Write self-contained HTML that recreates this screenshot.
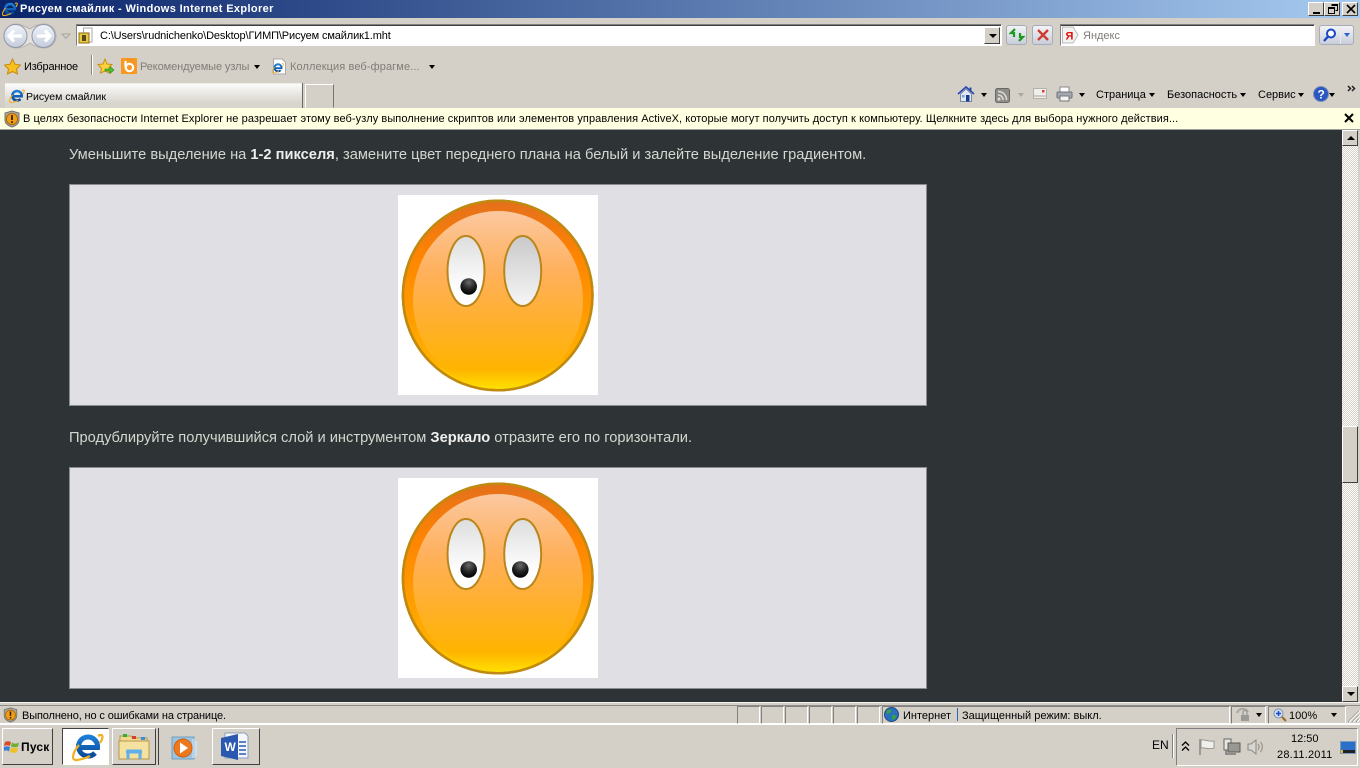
<!DOCTYPE html>
<html lang="ru"><head><meta charset="utf-8"><title>Рисуем смайлик</title>
<style>
html,body{margin:0;padding:0;width:1360px;height:768px;overflow:hidden;background:#d4d0c8}
body{position:relative;font-family:"Liberation Sans",Arial,sans-serif;font-size:11px;color:#000}
.a,.t,svg.i{position:absolute}
.t{white-space:nowrap;line-height:14px;height:14px}
.g{color:#807d78}
.ar{position:absolute;width:0;height:0;border-left:3.5px solid transparent;border-right:3.5px solid transparent;border-top:4px solid #000}
.btn{position:absolute;background:#d4d0c8;border:1px solid;border-color:#fff #404040 #404040 #fff;box-sizing:border-box}
.sunk{position:absolute;box-sizing:border-box;border:1px solid;border-color:#808080 #fff #fff #808080}
.p{position:absolute;left:69px;color:#d3d7cf;font-size:14.67px;line-height:18px;white-space:nowrap}
.p b{color:#eeeeec}
.box{position:absolute;left:69px;width:858px;height:222px;box-sizing:border-box;background:#e0dfe3;border:1px solid #8b8b8b}
.img{position:absolute;left:398px;width:200px;height:200px;background:#fff}
.tbtn{position:absolute;top:728px;height:37px;box-sizing:border-box;border:1px solid;border-color:#fff #404040 #404040 #fff;background:#d4d0c8}
</style></head><body>
<svg width="0" height="0" style="position:absolute"><defs>
<linearGradient id="gOut" x1="0" y1="0" x2="0" y2="1"><stop offset="0" stop-color="#e46f1c"/><stop offset=".3" stop-color="#ff8500"/><stop offset=".6" stop-color="#ff9c00"/><stop offset=".85" stop-color="#ffb000"/><stop offset="1" stop-color="#ffe000"/></linearGradient>
<linearGradient id="gIn" x1="0" y1="0" x2="0" y2="1"><stop offset="0" stop-color="#fbc8a0"/><stop offset=".35" stop-color="#ffb05a"/><stop offset=".65" stop-color="#ffb028"/><stop offset=".89" stop-color="#ffb400"/><stop offset="1" stop-color="#ffe000"/></linearGradient>
<linearGradient id="gEye" x1="0" y1="0" x2="0" y2="1"><stop offset="0" stop-color="#dddddd"/><stop offset=".75" stop-color="#ffffff"/></linearGradient>
<linearGradient id="gEye2" x1="0" y1="0" x2="0" y2="1"><stop offset="0" stop-color="#c9c9c9"/><stop offset="1" stop-color="#f6f6f6"/></linearGradient>
<radialGradient id="gPup" cx=".5" cy=".25" r=".75"><stop offset="0" stop-color="#6a6a6a"/><stop offset=".55" stop-color="#222"/><stop offset="1" stop-color="#000"/></radialGradient>
<linearGradient id="gBtn" x1="0" y1="0" x2="0" y2="1"><stop offset="0" stop-color="#f0f2f8"/><stop offset="1" stop-color="#c4ccdc"/></linearGradient>
<linearGradient id="gE" x1="0" y1="0" x2="0" y2="1"><stop offset="0" stop-color="#1a7ed4"/><stop offset="1" stop-color="#0a4a9a"/></linearGradient>
<symbol id="ie" viewBox="0 0 32 32"><path d="M23 22A9.500 9.500 0 1 1 25.500 16.500H7" fill="none" stroke="url(#gE)" stroke-width="5"/><path d="M26 5C31 2 32 6 28 12M7 14C0 22 -1 30 5 29C9 28.500 14 27 18 25" fill="none" stroke="#f0b020" stroke-width="2.200"/></symbol>
<symbol id="sh" viewBox="0 0 16 18"><path d="M8 1L15 3V10C15 14 11 16 8 17C5 16 1 14 1 10V3Z" fill="#a8a8a0" stroke="#77756e"/><circle cx="8" cy="9" r="5.600" fill="#f0a018" stroke="#b06808"/><path d="M8 5V10M8 11.200V13" stroke="#3a2000" stroke-width="1.800"/></symbol>
</defs></svg>

<!-- title bar -->
<div class="a" style="left:0;top:0;width:1360px;height:18px;background:linear-gradient(90deg,#0a246a,#a6caf0)"></div>
<svg class="i" style="left:2px;top:1px" width="16" height="16"><use href="#ie" width="16" height="16"/></svg>
<div class="t" style="left:20px;top:2px;color:#fff;font-weight:bold;font-size:11px;letter-spacing:.36px">Рисуем смайлик - Windows Internet Explorer</div>
<div class="btn" style="left:1308px;top:2px;width:16px;height:14px"><div class="a" style="left:4px;top:9px;width:7px;height:2px;background:#000"></div></div>
<div class="btn" style="left:1324px;top:2px;width:16px;height:14px"><svg class="i" style="left:3px;top:1px" width="10" height="10"><path d="M3.500 .5H9.500V6.500H7.500M3.500 1.500H9.500M.5 3.500H6.500V9.500H.5ZM.5 4.500H6.500" fill="none" stroke="#000"/></svg></div>
<div class="btn" style="left:1342px;top:2px;width:16px;height:14px"><svg class="i" style="left:3px;top:1px" width="10" height="10"><path d="M1 1L9 9M9 1L1 9" stroke="#000" stroke-width="1.600"/></svg></div>

<!-- back / forward -->
<svg class="i" style="left:1px;top:21px" width="72" height="30">
<path d="M3 15C3 8 9 3 15 3C20 3 25 6 29 8C33 5 37 3 43 3C50 3 55 9 55 15C55 22 50 27 43 27C37 27 33 25 29 22C25 25 20 27 15 27C9 27 3 22 3 15Z" fill="#e4e2dc" stroke="#b4b2aa"/>
<circle cx="14.500" cy="15" r="11.500" fill="url(#gBtn)" stroke="#8f98ac"/>
<circle cx="42.500" cy="15" r="11.500" fill="url(#gBtn)" stroke="#8f98ac"/>
<path d="M8 15H21M13 9.500L8 15L13 20.500" fill="none" stroke="#fff" stroke-width="3.200"/>
<path d="M36 15H49M44 9.500L49 15L44 20.500" fill="none" stroke="#fff" stroke-width="3.200"/>
<path d="M61 13H69L65 17.500Z" fill="#d4d0c8" stroke="#a8a69e"/>
</svg>

<!-- address bar -->
<div class="a" style="left:76px;top:24px;width:926px;height:22px;box-sizing:border-box;background:#fff;border:1px solid;border-color:#808080 #fff #fff #808080"></div>
<div class="a" style="left:77px;top:25px;width:924px;height:1px;background:#404040"></div>
<svg class="i" style="left:78px;top:27px" width="17" height="18"><path d="M5.500 1H14V15H5.500Z" fill="#fff" stroke="#aaa"/><rect x="1" y="6" width="10" height="10" fill="#e8c848" stroke="#8a6a10"/><rect x="4" y="8" width="4" height="6" fill="#5a4a10"/></svg>
<div class="t" style="left:100px;top:29px;font-size:11px;letter-spacing:-.13px">C:\Users\rudnichenko\Desktop\ГИМП\Рисуем смайлик1.mht</div>
<div class="btn" style="left:984px;top:27px;width:16px;height:17px"><div class="ar" style="left:3.500px;top:6px;border-left-width:4px;border-right-width:4px"></div></div>
<div class="a" style="left:1006px;top:25px;width:21px;height:20px;box-sizing:border-box;border:1px solid #a8acb8;border-radius:3px;background:linear-gradient(#f2f3f6,#c9cedb)"></div>
<svg class="i" style="left:1009px;top:27px" width="16" height="16"><path d="M6 2L2 6H5V10M10 14L14 10H11V6" fill="none" stroke="#1c9a20" stroke-width="2.200"/></svg>
<div class="a" style="left:1032px;top:25px;width:21px;height:20px;box-sizing:border-box;border:1px solid #a8acb8;border-radius:3px;background:linear-gradient(#f2f3f6,#c9cedb)"></div>
<svg class="i" style="left:1037px;top:29px" width="12" height="12"><path d="M1 1L11 11M11 1L1 11" stroke="#d03a30" stroke-width="2.400"/></svg>

<!-- search -->
<div class="a" style="left:1060px;top:24px;width:255px;height:22px;box-sizing:border-box;background:#fff;border:1px solid;border-color:#808080 #fff #fff #808080"></div>
<div class="a" style="left:1061px;top:25px;width:253px;height:1px;background:#404040"></div>
<svg class="i" style="left:1062px;top:26px" width="18" height="18"><path d="M.5 1H11L16 9L11 17H.5Z" fill="#f2f2f0" stroke="#bbb"/><text x="3.500" y="13.500" font-family="Liberation Sans" font-size="11" font-weight="bold" fill="#e01010">Я</text></svg>
<div class="t g" style="left:1083px;top:29px">Яндекс</div>
<div class="a" style="left:1319px;top:25px;width:35px;height:20px;box-sizing:border-box;border:1px solid #a8acb8;border-radius:3px;background:linear-gradient(#f2f3f6,#c9cedb)"></div>
<div class="a" style="left:1340px;top:26px;width:1px;height:18px;background:#e8e8ee"></div>
<svg class="i" style="left:1322px;top:27px" width="16" height="16"><circle cx="9" cy="6.500" r="4" fill="#fff" stroke="#1848c8" stroke-width="2"/><path d="M6 9.500L2 14" stroke="#1848c8" stroke-width="2.400"/></svg>
<div class="ar" style="left:1344px;top:33px;border-top-color:#2a62d0"></div>

<!-- favorites bar -->
<svg class="i" style="left:4px;top:58px" width="17" height="17"><path d="M8.500 1L11 6.200L16.500 7L12.500 11L13.500 16L8.500 13.500L3.500 16L4.500 11L.5 7L6 6.200Z" fill="#f6c020" stroke="#c88810"/></svg>
<div class="t" style="left:24px;top:60px;letter-spacing:-.2px">Избранное</div>
<div class="a" style="left:91px;top:55px;width:1px;height:20px;background:#8a8880;border-right:1px solid #fff"></div>
<svg class="i" style="left:97px;top:58px" width="18" height="17"><path d="M8 1L10 6L15 6.500L11.500 10.500L12.500 15L8 13L3.500 15L4.500 10.500L1 6.500L6 6Z" fill="#f8d040" stroke="#c89010"/><path d="M8 11H13V8.500L17 12L13 15.500V13H8Z" fill="#50c030" stroke="#2a8a18" stroke-width=".6"/></svg>
<div class="a" style="left:121px;top:58px;width:16px;height:16px;background:#f89820"></div>
<svg class="i" style="left:121px;top:58px" width="16" height="16"><circle cx="8.500" cy="9.500" r="3.700" fill="none" stroke="#fff" stroke-width="2.200"/><path d="M4.500 3V9.500" stroke="#fff" stroke-width="2.200"/></svg>
<div class="t g" style="left:140px;top:60px;letter-spacing:-.1px">Рекомендуемые узлы</div>
<div class="ar" style="left:254px;top:65px"></div>
<svg class="i" style="left:271px;top:58px" width="16" height="17"><path d="M2.500 1H11L14.500 4.500V16H2.500Z" fill="#fff" stroke="#a8a8a8"/><use href="#ie" x="1" y="4" width="12" height="12"/></svg>
<div class="t g" style="left:290px;top:60px;letter-spacing:.1px">Коллекция веб-фрагме...</div>
<div class="ar" style="left:429px;top:65px"></div>

<!-- tab row -->
<div class="a" style="left:5px;top:83px;width:297px;height:25px;background:linear-gradient(#fbfbfa,#d8d5ce 80%);border-top:1px solid #efeee9;box-sizing:border-box"></div>
<div class="a" style="left:302px;top:83px;width:1px;height:25px;background:#6a6862"></div>
<div class="a" style="left:305px;top:84px;width:29px;height:24px;box-sizing:border-box;border:1px solid;border-color:#fff #77756f transparent #fff;background:#d4d0c8"></div>
<svg class="i" style="left:9px;top:88px" width="16" height="16"><use href="#ie" width="16" height="16"/></svg>
<div class="t" style="left:26px;top:90px;font-size:10.5px">Рисуем смайлик</div>

<!-- command bar -->
<svg class="i" style="left:957px;top:85px" width="18" height="18"><path d="M1 9L9 2L17 9" fill="none" stroke="#2a48b0" stroke-width="1.600"/><path d="M3.500 9L9 4L14.500 9V16.500H3.500Z" fill="#dfe8f4" stroke="#7a88a0"/><rect x="9" y="10" width="3.500" height="6.500" fill="#1a3c90"/><rect x="5" y="10" width="2.500" height="2.500" fill="#78a0d0"/><rect x="12.500" y="2.500" width="2" height="4" fill="#2a48b0"/></svg>
<div class="ar" style="left:981px;top:93px"></div>
<svg class="i" style="left:995px;top:88px" width="15" height="15"><rect x=".5" y=".5" width="14" height="14" rx="2" fill="#8f8d88" stroke="#6a6864"/><circle cx="4" cy="11" r="1.500" fill="#dedcd6"/><path d="M3 7C6 7 8 9 8 12M3 3.500C8 3.500 11.500 7 11.500 12" fill="none" stroke="#dedcd6" stroke-width="1.500"/></svg>
<div class="ar" style="left:1018px;top:93px;border-top-color:#aaa8a2"></div>
<svg class="i" style="left:1033px;top:88px" width="14" height="12"><rect x=".5" y=".5" width="13" height="10" fill="#f0efeb" stroke="#b4b2ac"/><path d="M1 8H13" stroke="#a8a6a0"/><rect x="9" y="2" width="2.500" height="2.500" fill="#d84030"/></svg>
<svg class="i" style="left:1056px;top:86px" width="17" height="16"><rect x="4" y="1" width="9" height="5" fill="#fff" stroke="#888"/><rect x="1" y="6" width="15" height="6" rx="1" fill="#a4a8b0" stroke="#6c7078"/><rect x="4" y="10" width="9" height="5" fill="#f4f4f4" stroke="#777"/></svg>
<div class="ar" style="left:1079px;top:93px"></div>
<div class="t" style="left:1096px;top:88px">Страница</div><div class="ar" style="left:1149px;top:93px"></div>
<div class="t" style="left:1167px;top:88px">Безопасность</div><div class="ar" style="left:1240px;top:93px"></div>
<div class="t" style="left:1258px;top:88px">Сервис</div><div class="ar" style="left:1298px;top:93px"></div>
<svg class="i" style="left:1313px;top:86px" width="16" height="16"><circle cx="8" cy="8" r="7.500" fill="#2a58c0" stroke="#8090b8"/><text x="4.500" y="12.500" font-family="Liberation Sans" font-size="12" font-weight="bold" fill="#fff">?</text></svg>
<div class="ar" style="left:1329px;top:93px"></div>
<svg class="i" style="left:1347px;top:85px" width="9" height="8"><path d="M1 1L3.500 3.500L1 6M5 1L7.500 3.500L5 6" fill="none" stroke="#222" stroke-width="1.500"/></svg>

<!-- info bar -->
<div class="a" style="left:0;top:108px;width:1360px;height:21px;background:#ffffe1"></div>
<div class="a" style="left:0;top:129px;width:1360px;height:1px;background:#a0a0a0"></div>
<svg class="i" style="left:4px;top:110px" width="16" height="18"><use href="#sh" width="16" height="18"/></svg>
<div class="t" style="left:23px;top:112px;letter-spacing:.075px">В целях безопасности Internet Explorer не разрешает этому веб-узлу выполнение скриптов или элементов управления ActiveX, которые могут получить доступ к компьютеру. Щелкните здесь для выбора нужного действия...</div>
<svg class="i" style="left:1344px;top:113px" width="10" height="10"><path d="M1 1L9 9M9 1L1 9" stroke="#000" stroke-width="2"/></svg>

<!-- content -->
<div class="a" style="left:0;top:130px;width:1342px;height:572px;background:#2e3436"></div>
<div class="p" style="top:146px">Уменьшите выделение на <b>1-2 пикселя</b>, замените цвет переднего плана на белый и залейте выделение градиентом.</div>
<div class="box" style="top:184px"></div>
<div class="img" style="top:195px">
<svg width="200" height="200"><circle cx="99.700" cy="100.500" r="94.800" fill="url(#gOut)" stroke="#c08a10" stroke-width="2.500"/><ellipse cx="100" cy="105" rx="85" ry="89" fill="url(#gIn)"/><circle cx="99.700" cy="100.500" r="94.800" fill="none" stroke="#c08a10" stroke-width="2.500"/><ellipse cx="68" cy="76" rx="18.500" ry="35" fill="url(#gEye)" stroke="#b9861c" stroke-width="2"/><ellipse cx="124.700" cy="76" rx="18.500" ry="35" fill="url(#gEye2)" stroke="#b9861c" stroke-width="2"/><circle cx="70.700" cy="91.500" r="8.300" fill="url(#gPup)"/></svg>
</div>
<div class="p" style="top:429px">Продублируйте получившийся слой и инструментом <b>Зеркало</b> отразите его по горизонтали.</div>
<div class="box" style="top:467px"></div>
<div class="img" style="top:478px">
<svg width="200" height="200"><circle cx="99.700" cy="100.500" r="94.800" fill="url(#gOut)" stroke="#c08a10" stroke-width="2.500"/><ellipse cx="100" cy="105" rx="85" ry="89" fill="url(#gIn)"/><circle cx="99.700" cy="100.500" r="94.800" fill="none" stroke="#c08a10" stroke-width="2.500"/><ellipse cx="68" cy="76" rx="18.500" ry="35" fill="url(#gEye)" stroke="#b9861c" stroke-width="2"/><ellipse cx="124.700" cy="76" rx="18.500" ry="35" fill="url(#gEye)" stroke="#b9861c" stroke-width="2"/><circle cx="70.700" cy="91.500" r="8.300" fill="url(#gPup)"/><circle cx="122.300" cy="91.500" r="8.300" fill="url(#gPup)"/></svg>
</div>

<!-- scrollbar -->
<div class="a" style="left:1342px;top:130px;width:16px;height:572px;background-color:#eeece8;background-image:repeating-conic-gradient(#d4d0c8 0 25%,#fff 0 50%);background-size:2px 2px"></div>
<div class="btn" style="left:1342px;top:130px;width:16px;height:16px"><div class="ar" style="left:3.500px;top:5px;border-top:0;border-bottom:4px solid #000;border-left-width:4px;border-right-width:4px"></div></div>
<div class="btn" style="left:1342px;top:686px;width:16px;height:16px"><div class="ar" style="left:3.500px;top:5px;border-left-width:4px;border-right-width:4px"></div></div>
<div class="btn" style="left:1342px;top:426px;width:16px;height:57px"></div>
<div class="a" style="left:1358px;top:130px;width:2px;height:572px;background:#d4d0c8"></div>

<!-- status bar -->
<div class="a" style="left:0;top:702px;width:1360px;height:1px;background:#f4f3ef"></div>
<div class="a" style="left:0;top:705px;width:1360px;height:1px;background:#8f8d87"></div>
<div class="a" style="left:0;top:706px;width:1360px;height:18px;background:#d4d0c8"></div>
<div class="a" style="left:0;top:723px;width:1360px;height:2px;background:#fff"></div>
<svg class="i" style="left:3px;top:707px" width="15" height="16"><use href="#sh" width="15" height="16"/></svg>
<div class="t" style="left:22px;top:709px;letter-spacing:-.13px">Выполнено, но с ошибками на странице.</div>
<div class="sunk" style="left:737px;top:706px;width:23px;height:18px"></div>
<div class="sunk" style="left:761px;top:706px;width:23px;height:18px"></div>
<div class="sunk" style="left:785px;top:706px;width:23px;height:18px"></div>
<div class="sunk" style="left:809px;top:706px;width:23px;height:18px"></div>
<div class="sunk" style="left:833px;top:706px;width:23px;height:18px"></div>
<div class="sunk" style="left:857px;top:706px;width:23px;height:18px"></div>
<div class="sunk" style="left:882px;top:706px;width:348px;height:18px"></div>
<svg class="i" style="left:884px;top:707px" width="15" height="15"><circle cx="7.500" cy="7.500" r="7" fill="#2a70c0" stroke="#204878"/><path d="M3 3C6 2 8 3 7 5C6 7 3 6 2.500 8M8 8C11 7 13 9 11.500 11C10 13.500 8 13 8 11Z" fill="#3aa040"/></svg>
<div class="t" style="left:903px;top:709px">Интернет</div>
<div class="a" style="left:957px;top:708px;width:1px;height:13px;background:#2a6ab0"></div>
<div class="t" style="left:962px;top:709px">Защищенный режим: выкл.</div>
<div class="sunk" style="left:1231px;top:706px;width:35px;height:18px"></div>
<svg class="i" style="left:1235px;top:707px" width="16" height="16"><path d="M2 6A6 6 0 0 1 13 5" fill="none" stroke="#a8a6a0" stroke-width="2"/><rect x="6" y="8" width="8" height="6" fill="#9c9a94"/><path d="M8 8V5.500A2 2 0 0 1 12 5.500V8" fill="none" stroke="#9c9a94" stroke-width="1.300"/></svg>
<div class="ar" style="left:1256px;top:713px"></div>
<div class="sunk" style="left:1268px;top:706px;width:78px;height:18px"></div>
<svg class="i" style="left:1273px;top:708px" width="14" height="14"><circle cx="5.500" cy="5.500" r="4.500" fill="#cfe0f4" stroke="#7890b0"/><path d="M3 5.500H8M5.500 3V8" stroke="#1848c0" stroke-width="1.500"/><path d="M9 9L13 13" stroke="#a06828" stroke-width="2"/></svg>
<div class="t" style="left:1289px;top:709px">100%</div>
<div class="ar" style="left:1331px;top:713px"></div>
<svg class="i" style="left:1347px;top:709px" width="13" height="14"><path d="M1 13L12 2M5 13L12 6M9 13L12 10" stroke="#908e88"/><path d="M2 13L13 2M6 13L13 6M10 13L13 10" stroke="#fff"/></svg>

<!-- taskbar -->
<div class="tbtn" style="left:2px;width:51px"></div>
<svg class="i" style="left:4px;top:739px" width="16" height="15"><path d="M1 3C3 2 5 2 7 3L6 7C4 6 2 6 0 7Z" fill="#d84a28"/><path d="M8 3.500C10 5 12 5 15 3.500L14 7.500C12 8.500 9 8.500 7 7.500Z" fill="#70b030"/><path d="M0 8C2 7 4 7 6 8L5 12.500C3 11 1 11 -.5 12.500Z" fill="#3a80d0"/><path d="M7 8.500C9 9.500 12 9.500 14 8.500L13 13C11 14 8.500 14 6 13Z" fill="#f0c020"/></svg>
<div class="t" style="left:21px;top:740px;font-weight:bold;font-size:12px;letter-spacing:.2px">Пуск</div>
<div class="a" style="left:62px;top:728px;width:47px;height:37px;box-sizing:border-box;background:#fff;border:1px solid;border-color:#404040 #fff #fff #404040"></div>
<svg class="i" style="left:72px;top:731px" width="32" height="32"><use href="#ie" width="32" height="32"/></svg>
<div class="tbtn" style="left:112px;width:44px"></div>
<div class="a" style="left:158px;top:728px;width:1px;height:37px;background:#404040"></div>
<svg class="i" style="left:118px;top:733px" width="33" height="28"><path d="M2 3H13L15 5H29V11H2Z" fill="#f0d890" stroke="#b89848"/><rect x="5" y="1" width="4" height="3" fill="#30b030"/><rect x="14" y="3" width="4" height="3" fill="#d04030"/><rect x="23" y="4" width="4" height="3" fill="#3090e0"/><path d="M1 8H31V26H1Z" fill="#f6e2a0" stroke="#b89848"/><path d="M10 26V18H22V26M8 19H24" fill="none" stroke="#60b0e8" stroke-width="3"/></svg>
<svg class="i" style="left:170px;top:734px" width="32" height="28"><rect x="2" y="3" width="22" height="22" fill="#9cc4e0" stroke="#70a0c4"/><rect x="22" y="5" width="3" height="19" fill="#b8d4e8"/><rect x="25" y="7" width="2" height="15" fill="#cfe0ec"/><circle cx="13" cy="14" r="9" fill="#f0781c" stroke="#d06010"/><path d="M10 8.500L18 14L10 19.500Z" fill="#fff"/></svg>
<div class="tbtn" style="left:212px;width:48px"></div>
<svg class="i" style="left:219px;top:731px" width="34" height="32"><path d="M6 2H26L29 5V27H6Z" fill="#f4f6fa" stroke="#8aa0c0"/><path d="M2 7L19 3V29L2 25Z" fill="#2a58b0"/><text x="5.500" y="20" font-family="Liberation Sans" font-size="12" font-weight="bold" fill="#fff">W</text><path d="M20 11H27M20 15H27M20 19H27M20 23H27" stroke="#2a58b0" stroke-width="1.400"/></svg>

<div class="t" style="left:1152px;top:738px;font-size:12px">EN</div>
<div class="a" style="left:1172px;top:734px;width:1px;height:24px;background:#808080;border-right:1px solid #fff"></div>
<div class="sunk" style="left:1176px;top:728px;width:182px;height:38px"></div>
<svg class="i" style="left:1181px;top:741px" width="9" height="11"><path d="M1 4.500L4.500 1L8 4.500M1 9.500L4.500 6L8 9.500" fill="none" stroke="#000" stroke-width="1.300"/></svg>
<svg class="i" style="left:1198px;top:738px" width="18" height="18"><path d="M2 1V17" stroke="#8a8882" stroke-width="1.500"/><path d="M3 2C7 1 9 4 16 3V10C10 12 7 9 3 10Z" fill="#f2f0ea" stroke="#9a9890"/></svg>
<svg class="i" style="left:1223px;top:738px" width="18" height="18"><rect x="1" y="1" width="7" height="11" fill="#e8e6e0" stroke="#666"/><rect x="5" y="5" width="12" height="9" fill="#9a9892" stroke="#5a5a54"/><path d="M3 12V16H13" fill="none" stroke="#777" stroke-width="1.500"/></svg>
<svg class="i" style="left:1247px;top:738px" width="18" height="18"><path d="M1 6H4L9 2V16L4 12H1Z" fill="#d8d6d0" stroke="#8a8882"/><path d="M11 6C12.500 8 12.500 10 11 12M13.500 4C16 7 16 11 13.500 14" fill="none" stroke="#9a9890" stroke-width="1.300"/></svg>
<div class="t" style="left:1291px;top:732px;font-size:11px">12:50</div>
<div class="t" style="left:1277px;top:748px;font-size:11px;letter-spacing:.2px">28.11.2011</div>
<svg class="i" style="left:1340px;top:741px" width="16" height="14"><rect x=".5" y=".5" width="15" height="12" fill="#2a70c8" stroke="#7a98c0"/><rect x="3" y="9" width="12" height="3" fill="#222"/><rect x="1" y="9" width="2" height="3" fill="#e0c030"/></svg>
</body></html>
